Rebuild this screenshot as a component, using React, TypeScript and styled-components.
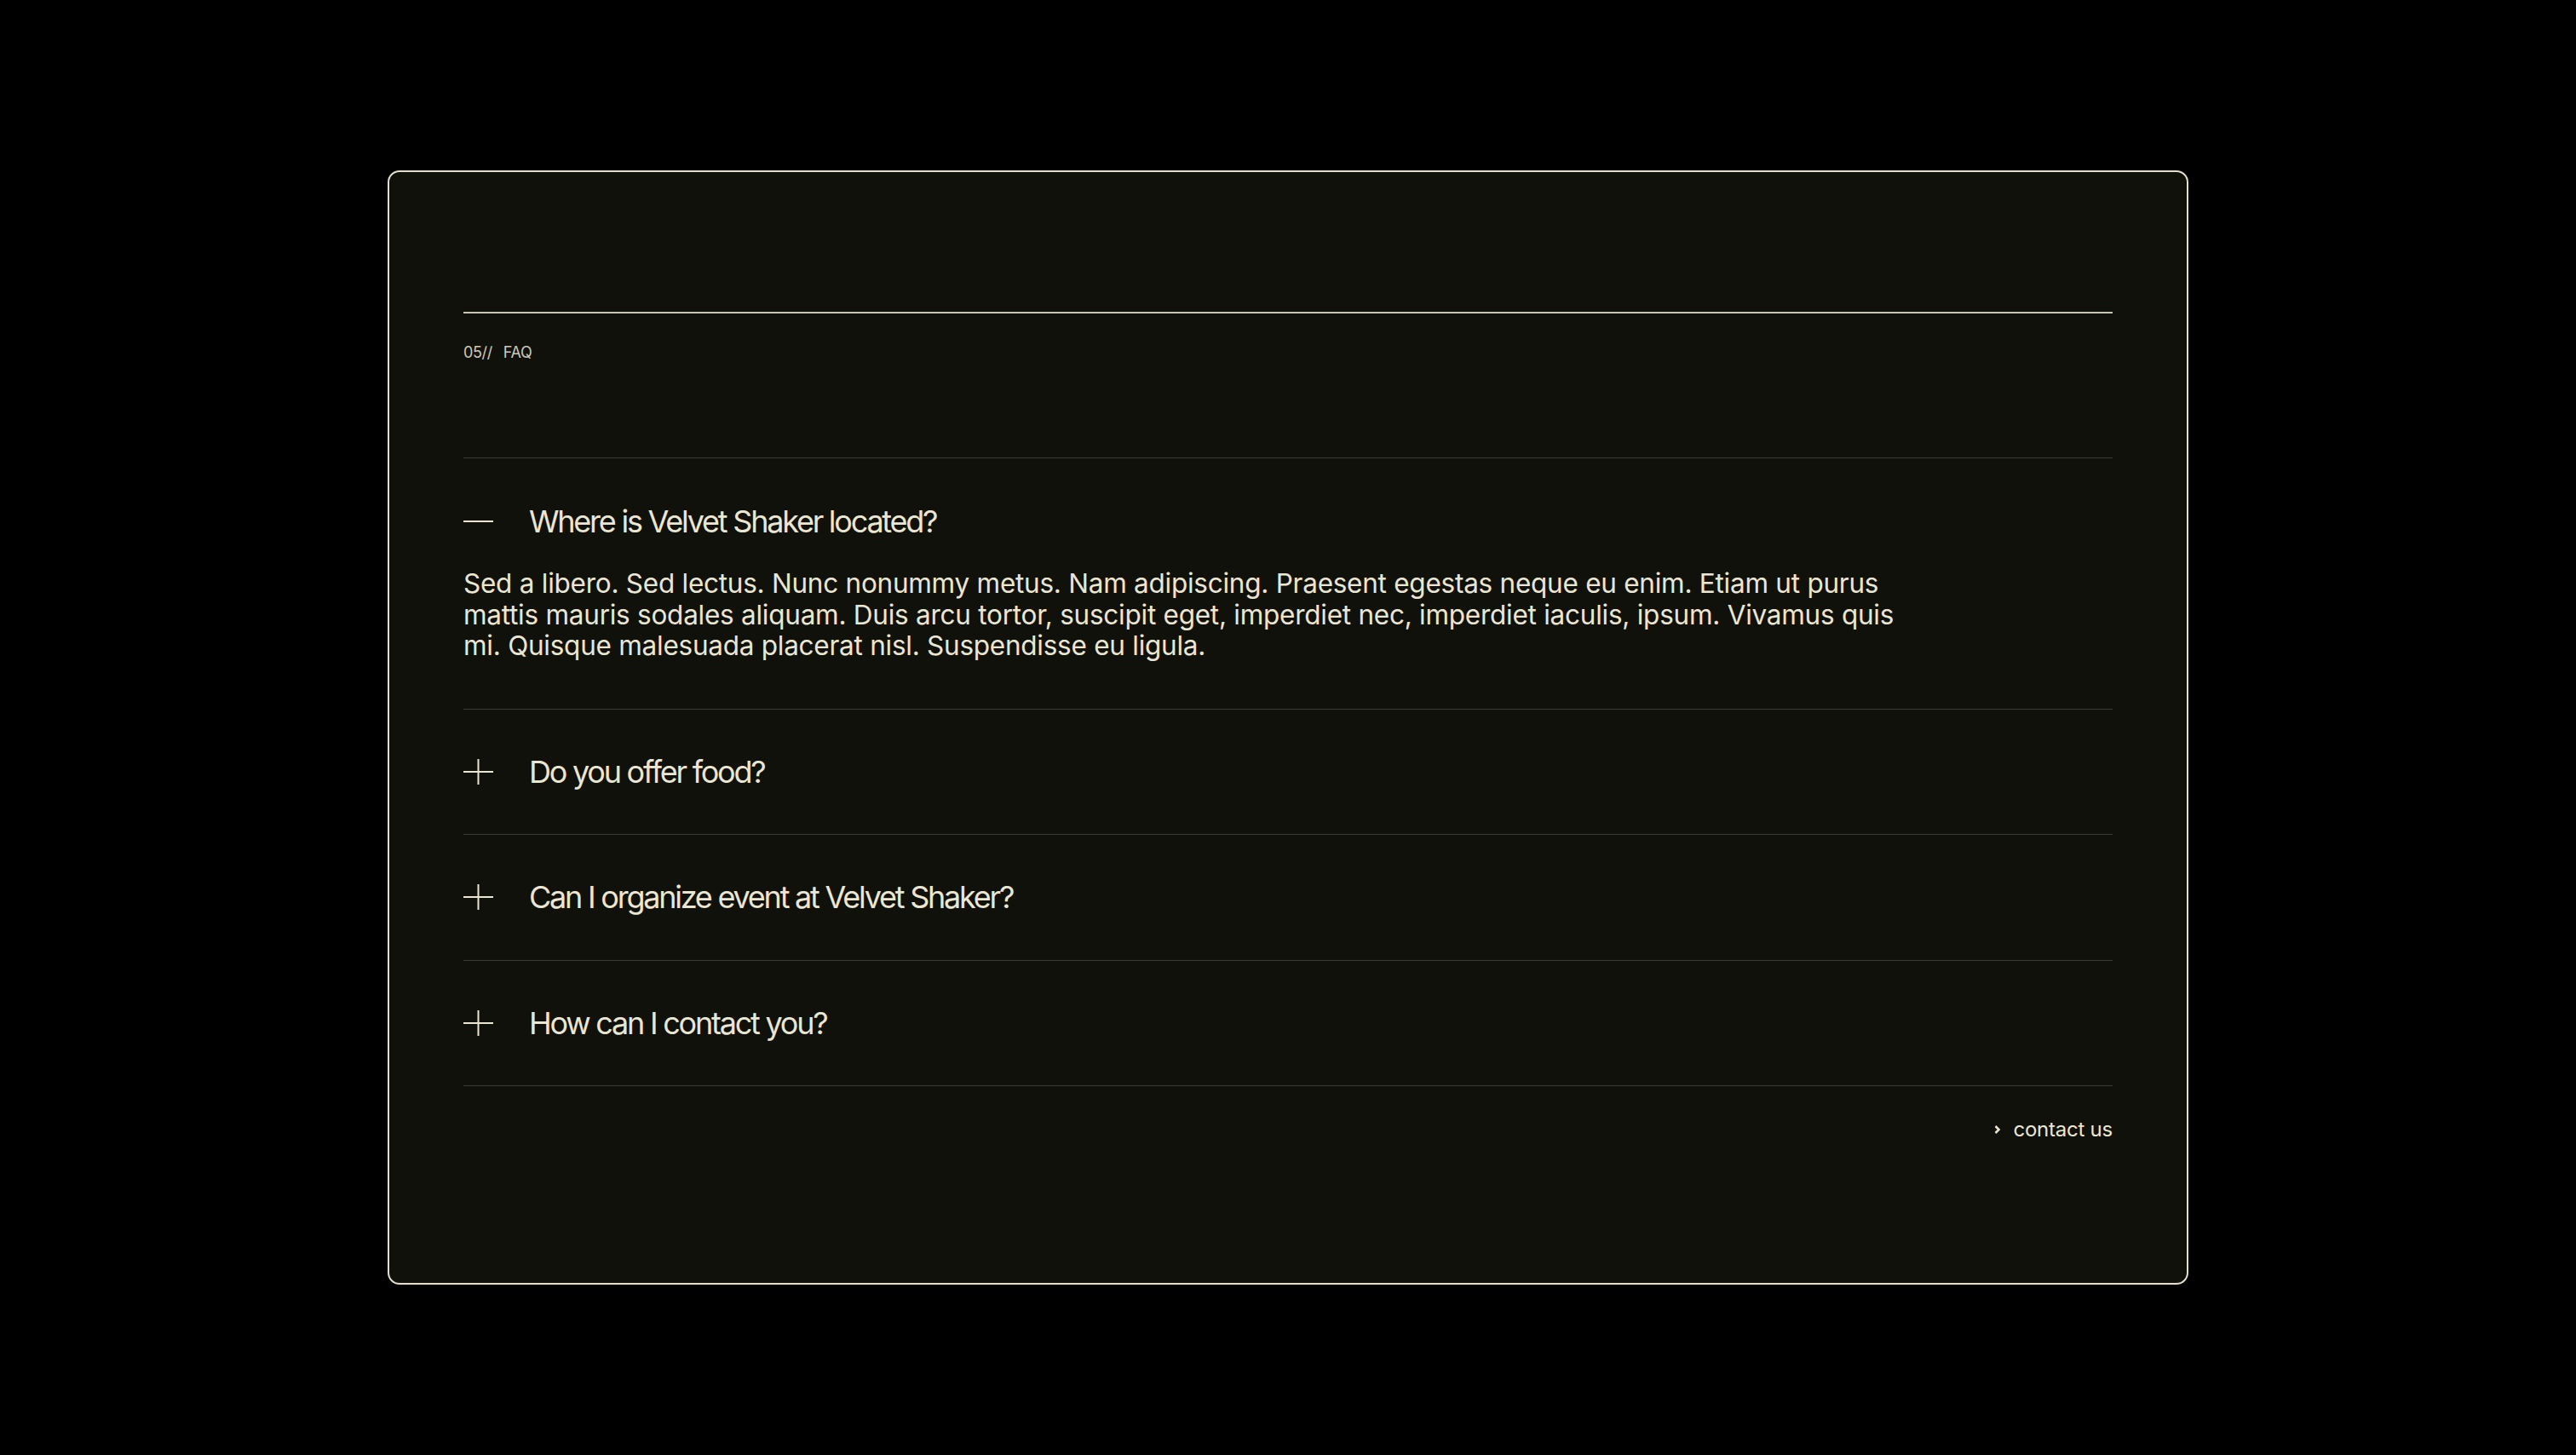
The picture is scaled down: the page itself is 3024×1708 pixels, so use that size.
import React, { useState } from "react";
import styled, { createGlobalStyle } from "styled-components";

const GlobalStyle = createGlobalStyle`
  html, body {
    margin: 0;
    padding: 0;
    background: #000000;
  }
  body {
    font-family: Inter, "Noto Sans", "Liberation Sans", sans-serif;
    -webkit-font-smoothing: antialiased;
  }
  * { box-sizing: border-box; }
`;

const Page = styled.div`
  width: 100%;
  min-height: 100vh;
  display: flex;
  align-items: center;
  justify-content: center;
  background: #000000;
`;

const Card = styled.section`
  width: 2114px;
  height: 1308px;
  border: 2px solid #e3dfcc;
  border-radius: 14px;
  background: #11110c;
  padding: 164px 87px 0;
  display: flex;
  flex-direction: column;
`;

const TopRule = styled.div`
  height: 2px;
  background: #c9c5b2;
`;

const Label = styled.div`
  margin-top: 35px;
  display: flex;
  gap: 13px;
  font-size: 18px;
  line-height: 22px;
  color: #cdc9b8;
  letter-spacing: -0.02em;
`;

const List = styled.div`
  margin-top: 112px;
  border-bottom: 1px solid #3b3b35;
`;

const Item = styled.div`
  border-top: 1px solid #3b3b35;
`;

const Question = styled.button<{ $open: boolean }>`
  width: 100%;
  display: flex;
  align-items: center;
  gap: 42px;
  padding: ${(p) => (p.$open ? "55px 0 36px" : "54px 0 54.5px")};
  background: none;
  border: none;
  cursor: pointer;
  text-align: left;
  font-family: Inter, "Noto Sans", "Liberation Sans", sans-serif;
  font-size: 36px;
  line-height: 38px;
  font-weight: 400;
  letter-spacing: -0.062em;
  color: #ebe6d2;
`;

const IconBox = styled.span`
  width: 35px;
  height: 34px;
  flex: 0 0 auto;
  display: flex;
  align-items: center;
  justify-content: center;
  color: #ebe6d2;
`;

const Answer = styled.p`
  margin: 0;
  padding-bottom: 55px;
  max-width: 1700px;
  font-size: 31.5px;
  line-height: 36.6px;
  letter-spacing: -0.008em;
  color: #ebe6d2;
`;

const Footer = styled.div`
  margin-top: 37px;
  display: flex;
  justify-content: flex-end;
`;

const ContactLink = styled.a`
  display: flex;
  align-items: center;
  gap: 15px;
  font-size: 24px;
  line-height: 28px;
  letter-spacing: -0.01em;
  color: #ebe6d2;
  text-decoration: none;
  cursor: pointer;
`;

const Icon = ({ open }: { open: boolean }) => (
  <IconBox>
    <svg width="35" height="34" viewBox="0 0 35 34" fill="none">
      <line x1="0" y1="17" x2="35" y2="17" stroke="currentColor" strokeWidth="2" />
      {!open && (
        <line x1="17.5" y1="2" x2="17.5" y2="32" stroke="currentColor" strokeWidth="2" />
      )}
    </svg>
  </IconBox>
);

const faqs = [
  {
    q: "Where is Velvet Shaker located?",
    a: "Sed a libero. Sed lectus. Nunc nonummy metus. Nam adipiscing. Praesent egestas neque eu enim. Etiam ut purus mattis mauris sodales aliquam. Duis arcu tortor, suscipit eget, imperdiet nec, imperdiet iaculis, ipsum. Vivamus quis mi. Quisque malesuada placerat nisl. Suspendisse eu ligula.",
  },
  {
    q: "Do you offer food?",
    a: "Sed a libero. Sed lectus. Nunc nonummy metus. Nam adipiscing.",
  },
  {
    q: "Can I organize event at Velvet Shaker?",
    a: "Sed a libero. Sed lectus. Nunc nonummy metus. Nam adipiscing.",
  },
  {
    q: "How can I contact you?",
    a: "Sed a libero. Sed lectus. Nunc nonummy metus. Nam adipiscing.",
  },
];

export default function App() {
  const [open, setOpen] = useState<number>(0);
  return (
    <>
      <GlobalStyle />
      <Page>
        <Card>
          <TopRule />
          <Label>
            <span>05//</span>
            <span>FAQ</span>
          </Label>
          <List>
            {faqs.map((f, i) => (
              <Item key={i}>
                <Question $open={open === i} onClick={() => setOpen(open === i ? -1 : i)}>
                  <Icon open={open === i} />
                  <span>{f.q}</span>
                </Question>
                {open === i && <Answer>{f.a}</Answer>}
              </Item>
            ))}
          </List>
          <Footer>
            <ContactLink>
              <svg width="9" height="12" viewBox="0 0 9 12" fill="none">
                <path d="M2.5 2 L6.5 6 L2.5 10" stroke="currentColor" strokeWidth="2.5" />
              </svg>
              <span>contact us</span>
            </ContactLink>
          </Footer>
        </Card>
      </Page>
    </>
  );
}
